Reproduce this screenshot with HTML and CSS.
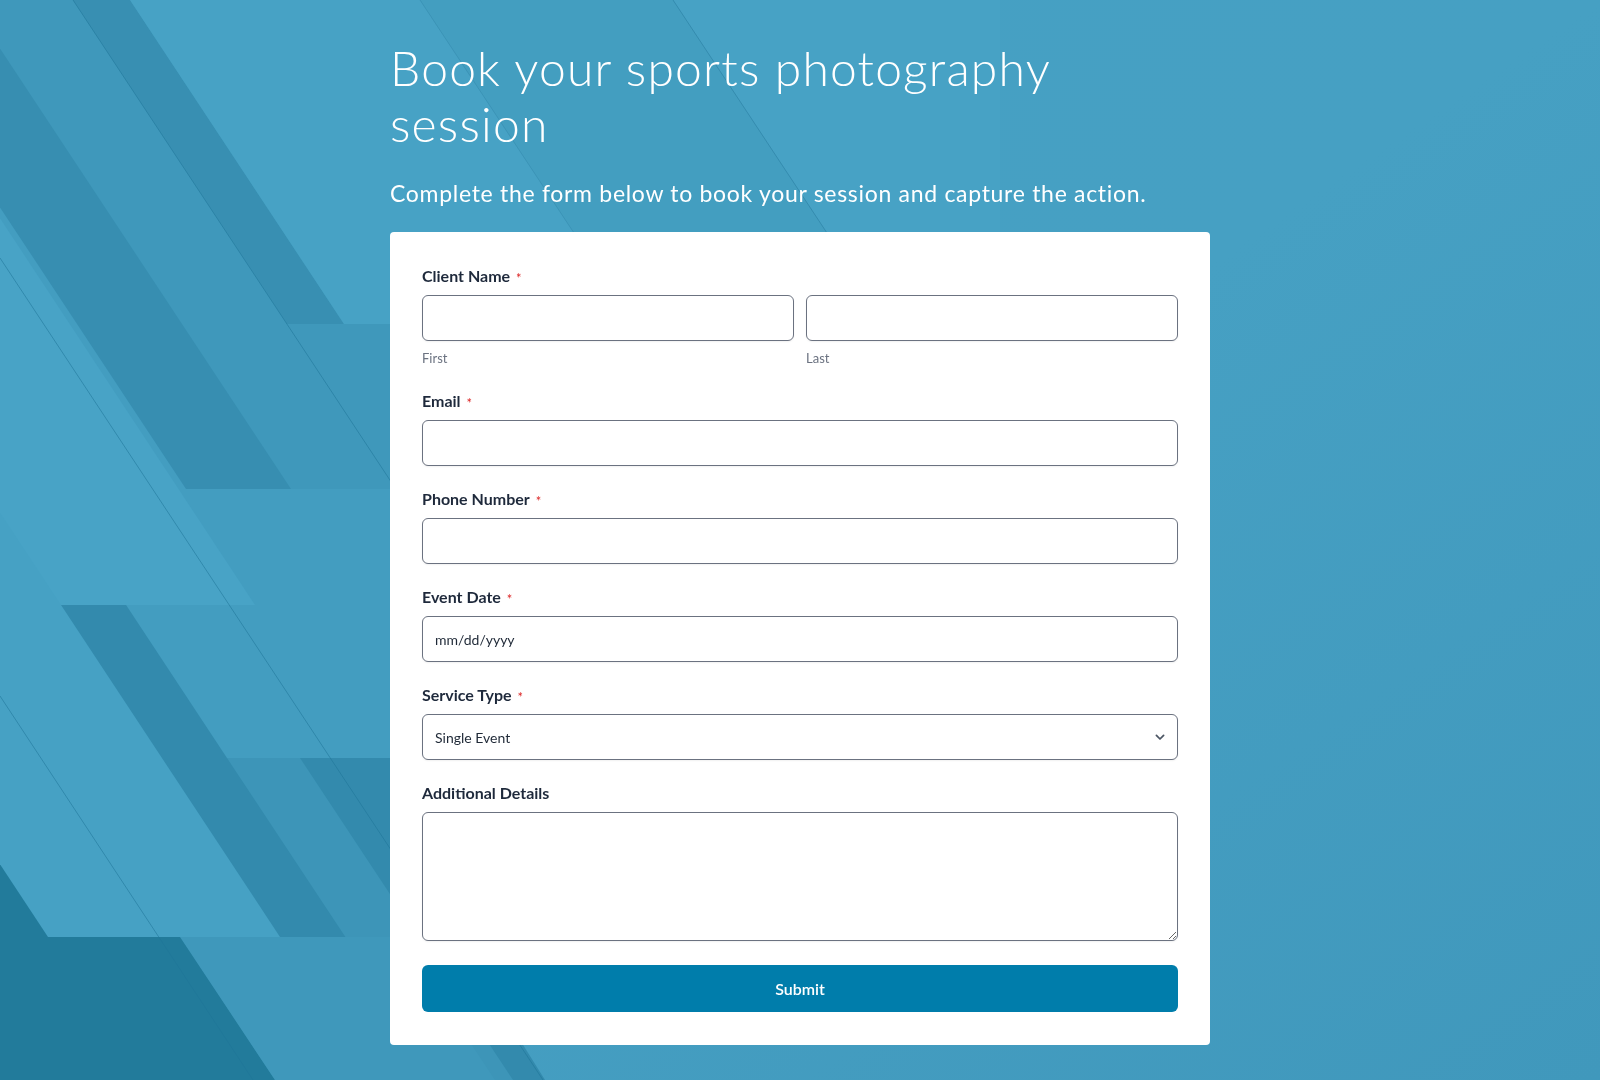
FILE: index.html
```html
<!DOCTYPE html>
<html lang="en">
<head>
<meta charset="utf-8">
<title>Book your sports photography session</title>
<link rel="stylesheet" href="styles.css">
</head>
<body>
<div class="backdrop">
  <svg class="backdrop-art" viewBox="0 0 1600 1080" preserveAspectRatio="none" xmlns="http://www.w3.org/2000/svg">
    <defs>
      <linearGradient id="base" x1="0" y1="0" x2="1" y2="1">
        <stop offset="0" stop-color="#45a0c3"/>
        <stop offset="0.5" stop-color="#46a0c3"/>
        <stop offset="1" stop-color="#4098bc"/>
      </linearGradient>
      <clipPath id="leftclip">
        <polygon points="0,0 1000,0 1000,240 400,240 400,1040 520,1040 545,1080 0,1080"/>
      </clipPath>
    </defs>
    <rect width="1600" height="1080" fill="url(#base)"/>
    <g clip-path="url(#leftclip)">
      <!-- dark underlay on the left -->
      <polygon points="-1200,0 900,0 1613,1080 -487,1080" fill="#338aad"/>
      <!-- band G (bottom 758) -->
      <polygon points="-273,0 700,0 1200,758 227,758" fill="#439dc0"/>
      <!-- band C (bottom 489) -->
      <polygon points="-38,0 700,0 1023,489 285,489" fill="#3f98bb"/>
      <!-- dark stripe at top -->
      <polygon points="73,0 130,0 344,324 287,324" fill="#388fb2"/>
      <!-- dark band D -->
      <polygon points="-137,0 -32,0 291,489 186,489" fill="#378eb1"/>
      <!-- band A (bottom 324) -->
      <polygon points="130,0 1700,0 1914,324 344,324" fill="#47a2c5"/>
      <!-- medium band above title area -->
      <polygon points="420,0 673,0 827,233 574,233" fill="#4099bc" opacity="0.5"/>
      <!-- band E (bottom 605) -->
      <polygon points="-376,0 -144,0 255,605 23,605" fill="#48a3c6"/>
      <!-- bands below 758 -->
      <polygon points="-273,758 -60,758 148,1080 -60,1080" fill="#3d95b8"/>
      <polygon points="227,758 300,758 513,1080 440,1080" fill="#3d95b8"/>
      <!-- bottom-left darkest -->
      <polygon points="-1200,0 -438,0 275,1080 -487,1080" fill="#227b9b"/>
      <!-- band H (bottom 937) -->
      <polygon points="-570,0 -338,0 280,937 48,937" fill="#46a1c4"/>
      <!-- medium region right of the dark corner -->
      <polygon points="180,937 400,937 495,1080 275,1080" fill="#3f98bb"/>
      <!-- thin lines -->
      <line x1="73" y1="0" x2="786" y2="1080" stroke="#1f7598" stroke-width="1" opacity="0.55"/>
      <line x1="0" y1="258" x2="543" y2="1080" stroke="#1f7598" stroke-width="1" opacity="0.55"/>
      <line x1="0" y1="696" x2="253" y2="1080" stroke="#1f7598" stroke-width="1" opacity="0.55"/>
      <line x1="420" y1="0" x2="574" y2="233" stroke="#2a7fa2" stroke-width="1" opacity="0.35"/>
      <line x1="673" y1="0" x2="827" y2="233" stroke="#2a7fa2" stroke-width="1" opacity="0.6"/>
    </g>
  </svg>
</div>

<main class="page">
  <h1 class="title">Book your sports photography session</h1>
  <p class="subtitle">Complete the form below to book your session and capture the action.</p>

  <form class="card">
    <div class="field">
      <label class="label">Client Name <span class="req">*</span></label>
      <div class="name-row">
        <div class="name-part">
          <input class="input" type="text">
          <span class="hint">First</span>
        </div>
        <div class="name-part">
          <input class="input" type="text">
          <span class="hint">Last</span>
        </div>
      </div>
    </div>

    <div class="field">
      <label class="label">Email <span class="req">*</span></label>
      <input class="input" type="email">
    </div>

    <div class="field">
      <label class="label">Phone Number <span class="req">*</span></label>
      <input class="input" type="tel">
    </div>

    <div class="field">
      <label class="label">Event Date <span class="req">*</span></label>
      <input class="input input-date" type="text" placeholder="mm/dd/yyyy">
    </div>

    <div class="field">
      <label class="label">Service Type <span class="req">*</span></label>
      <div class="select-wrap">
        <select class="input select">
          <option>Single Event</option>
          <option>Season Package</option>
          <option>Team Photos</option>
        </select>
        <svg class="chevron" viewBox="0 0 20 20" width="16" height="16" aria-hidden="true">
          <path d="M5.5 8l4.5 4.5L14.5 8" fill="none" stroke="#4b5563" stroke-width="2.2" stroke-linecap="round" stroke-linejoin="round"/>
        </svg>
      </div>
    </div>

    <div class="field field-last">
      <label class="label">Additional Details</label>
      <textarea class="input textarea"></textarea>
    </div>

    <button class="submit" type="button">Submit</button>
  </form>
</main>
</body>
</html>
```

FILE: styles.css
```css
* {
  box-sizing: border-box;
}

html, body {
  margin: 0;
  height: 1080px;
  overflow: hidden;
}

body {
  font-family: Lato, "Open Sans", "Liberation Sans", sans-serif;
  color: #1e293b;
  background: #45a0c3;
}

.backdrop {
  position: fixed;
  inset: 0;
  z-index: 0;
}

.backdrop-art {
  display: block;
  width: 100%;
  height: 100%;
}

.page {
  position: relative;
  z-index: 1;
  width: 820px;
  margin: 0 auto;
  padding-top: 40px;
}

.title {
  margin: 0;
  max-width: 720px;
  font-size: 48px;
  line-height: 56px;
  font-weight: 300;
  letter-spacing: 1.2px;
  color: #ffffff;
}

.subtitle {
  margin: 25px 0 23px;
  font-size: 23px;
  line-height: 32px;
  font-weight: 400;
  letter-spacing: 0.7px;
  color: #ffffff;
}

.card {
  background: #ffffff;
  border-radius: 4px;
  padding: 31px 32px 33px;
}

.field {
  margin-bottom: 20px;
}

.field-last {
  margin-bottom: 24px;
}

.label {
  display: flex;
  align-items: center;
  height: 24px;
  margin-bottom: 8px;
  font-size: 16px;
  font-weight: 700;
  color: #1e293b;
}

.req {
  margin-left: 6px;
  padding-top: 5px;
  font-size: 13px;
  color: #dc2626;
  font-weight: 400;
}

.name-row {
  display: grid;
  grid-template-columns: 1fr 1fr;
  gap: 12px;
}

.name-part {
  display: flex;
  flex-direction: column;
}

.hint {
  margin-top: 7px;
  font-size: 13px;
  line-height: 20px;
  color: #6b7280;
}

.input {
  display: block;
  width: 100%;
  height: 46px;
  padding: 0 12px;
  border: 1px solid #6b7280;
  border-radius: 6px;
  background: #ffffff;
  box-shadow: 0 1px 2px rgba(0, 0, 0, 0.06);
  font-family: Lato, "Liberation Sans", sans-serif;
  font-size: 14px;
  color: #1f2937;
  outline: none;
}

.input-date::placeholder {
  color: #1f2937;
  opacity: 1;
}

.select-wrap {
  position: relative;
}

.select {
  appearance: none;
  -webkit-appearance: none;
  padding-right: 40px;
}

.chevron {
  position: absolute;
  right: 10px;
  top: 15px;
  pointer-events: none;
}

.textarea {
  height: 129px;
  padding: 10px 12px;
  resize: vertical;
}

.submit {
  display: block;
  width: 100%;
  height: 47px;
  border: none;
  border-radius: 6px;
  background: #007dab;
  color: #ffffff;
  font-family: Lato, "Liberation Sans", sans-serif;
  font-size: 16px;
  font-weight: 600;
  cursor: pointer;
}
```
